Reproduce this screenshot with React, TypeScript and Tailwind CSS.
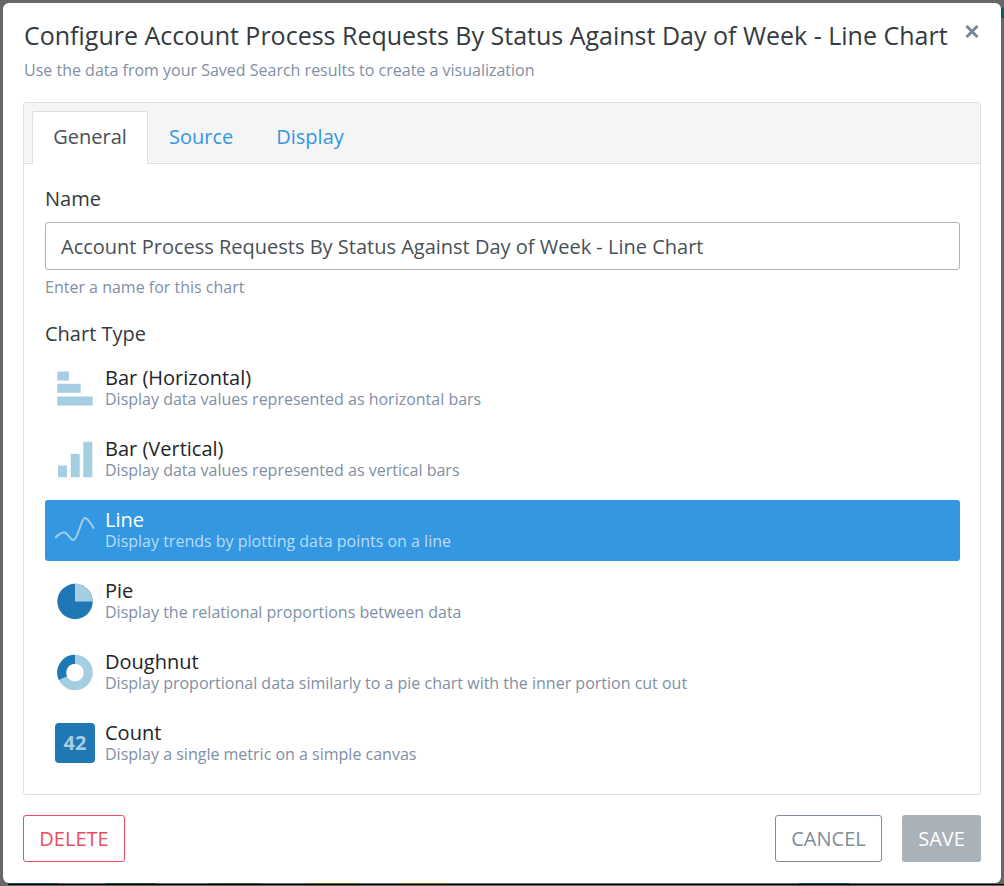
import React from "react";

const charts = [
  { name: "Bar (Horizontal)", desc: "Display data values represented as horizontal bars", icon: "hbar" },
  { name: "Bar (Vertical)", desc: "Display data values represented as vertical bars", icon: "vbar" },
  { name: "Line", desc: "Display trends by plotting data points on a line", icon: "line", active: true },
  { name: "Pie", desc: "Display the relational proportions between data", icon: "pie" },
  { name: "Doughnut", desc: "Display proportional data similarly to a pie chart with the inner portion cut out", icon: "doughnut" },
  { name: "Count", desc: "Display a single metric on a simple canvas", icon: "count" },
];

function ChartIcon({ type }: { type: string }) {
  if (type === "count") {
    return (
      <div className="w-10 h-10 mt-[-1px] rounded-[4px] bg-[#1f78b4] flex items-center justify-center text-[#a6cee3] text-[20px] font-bold">
        42
      </div>
    );
  }
  return (
    <svg width="40" height="40" viewBox="0 0 40 40">
      {type === "hbar" && (
        <g fill="#a6cee3">
          <rect x="2.3" y="2.5" width="11.7" height="9" />
          <rect x="2.3" y="14.8" width="23.4" height="9" />
          <rect x="2.3" y="27.5" width="35.4" height="9" />
        </g>
      )}
      {type === "vbar" && (
        <g fill="#a6cee3">
          <rect x="3" y="25.5" width="9" height="11.7" />
          <rect x="15.7" y="13.8" width="9" height="23.4" />
          <rect x="28.3" y="1.8" width="9" height="35.4" />
        </g>
      )}
      {type === "line" && (
        <path
          d="M0 27 C3 24 6 21.500 9 21.500 C13 21.500 15 29.500 18.500 29 C23 28.500 26 7 30 7 C33 7 36 13 39 17.500"
          fill="none"
          stroke="#a6cee3"
          strokeWidth="2"
        />
      )}
      {type === "pie" && (
        <g>
          <circle cx="20" cy="19.500" r="17.700" fill="#1f78b4" />
          <path d="M20 19.500 V1.800 A17.700 17.700 0 0 1 37.700 19.500 Z" fill="#a6cee3" />
        </g>
      )}
      {type === "doughnut" && (
        <g fill="none" strokeWidth="9">
          <circle cx="20" cy="19.500" r="13.300" stroke="#a6cee3" />
          <path d="M7.950 25.100 A13.300 13.300 0 0 1 20 6.200" stroke="#1f78b4" />
        </g>
      )}
    </svg>
  );
}

export default function App() {
  return (
    <div className="relative w-[1004px] h-[886px] bg-[#666767] pt-[3px] px-[3px] font-['Open_Sans',sans-serif] overflow-hidden">
      {/* bit of the page behind the dialog */}
      <div className="absolute right-0 top-[8px] w-[3px] h-[10px] bg-[#0f5a5e]" />

      <div className="w-[998px] h-[880px] bg-white rounded-[6px] px-5 flex flex-col">
        {/* Header */}
        <div className="flex justify-between pt-[12px] h-[99px]">
          <div>
            <h1 className="text-[25px] leading-[40px] text-[#343a40] whitespace-nowrap ml-[1px]">
              Configure Account Process Requests By Status Against Day of Week - Line Chart
            </h1>
            <p className="text-[16px] leading-[20px] mt-[5px] ml-[1px] text-[#7f8fa4] whitespace-nowrap">
              Use the data from your Saved Search results to create a visualization
            </p>
          </div>
          <svg width="16" height="15" viewBox="0 0 16 15" className="mt-[9px] mr-[1px]">
            <path d="M2.500 2 L13.500 13 M13.500 2 L2.500 13" stroke="#788594" strokeWidth="3" />
          </svg>
        </div>

        {/* Tabbed card */}
        <div className="w-[958px] h-[693px] border border-[#dfdfdf] rounded-[3px] flex flex-col">
          <div className="h-[61px] bg-[#f5f5f5] border-b border-[#dfdfdf] flex pl-2 pt-2 rounded-t-[3px]">
            <div className="h-[53px] w-[116px] pb-[2px] bg-white border border-[#dfdfdf] border-b-0 rounded-t-[3px] flex items-center justify-center text-[20px] text-[#495057]">
              General
            </div>
            <div className="h-[52px] px-[21px] flex items-center text-[20px] text-[#3397e2]">Source</div>
            <div className="h-[52px] px-[22px] flex items-center text-[20px] text-[#3397e2]">Display</div>
          </div>

          <div className="px-[21px] pt-[21px]">
            <label className="block text-[20px] leading-[28px] text-[#343a40]">Name</label>
            <div className="mt-[9px] h-[48px] w-[915px] border border-[#aab4bd] rounded-[3px] px-[15px] pt-[2px] flex items-center text-[20px] text-[#495057] whitespace-nowrap">
              Account Process Requests By Status Against Day of Week - Line Chart
            </div>
            <p className="mt-[7px] text-[16px] leading-[20px] text-[#7f8fa4]">Enter a name for this chart</p>
            <label className="block mt-[23px] text-[20px] leading-[28px] text-[#343a40]">Chart Type</label>

            <div className="mt-[10px] flex flex-col gap-[10px]">
              {charts.map((c) => (
                <div
                  key={c.name}
                  className={
                    "h-[61px] w-[915px] rounded-[3px] flex items-center pl-[10px] " +
                    (c.active ? "bg-[#3397e2]" : "")
                  }
                >
                  <div className="w-[40px] h-[40px] shrink-0">
                    <ChartIcon type={c.icon} />
                  </div>
                  <div className="ml-[10px] mt-[-1px]">
                    <div className={"text-[20px] leading-[22px] " + (c.active ? "text-white" : "text-[#212529]")}>
                      {c.name}
                    </div>
                    <div className={"text-[16px] leading-[20px] " + (c.active ? "text-[#b8dcf6]" : "text-[#7f8fa4]")}>
                      {c.desc}
                    </div>
                  </div>
                </div>
              ))}
            </div>
          </div>
        </div>

        {/* Footer */}
        <div className="flex justify-between mt-[20px]">
          <button className="w-[102px] h-[47px] border border-[#ec4c5f] rounded-[3px] text-[20px] text-[#ec4c5f]">
            DELETE
          </button>
          <div className="flex gap-[20px]">
            <button className="w-[107px] h-[47px] border border-[#7f8c99] rounded-[3px] text-[20px] text-[#7f8c99]">
              CANCEL
            </button>
            <button className="w-[79px] h-[47px] bg-[#a9b1b9] rounded-[3px] text-[20px] text-white">SAVE</button>
          </div>
        </div>
      </div>

      {/* strip of the page showing under the dialog */}
      <div className="flex h-[2px] border-b border-black ml-[5px] w-[996px]">
        <div className="w-[50px] bg-[#0f4f55]" />
        <div className="w-[48px]" />
        <div className="w-[50px] bg-[#1a5320]" />
        <div className="w-[53px]" />
        <div className="w-[50px] bg-[#3e5a1c]" />
        <div className="w-[48px]" />
        <div className="w-[50px] bg-[#6b6a16]" />
        <div className="w-[40px]" />
        <div className="w-[50px] bg-[#8a5f22]" />
        <div className="w-[352px]" />
        <div className="w-[50px] bg-[#0f4f55]" />
      </div>
    </div>
  );
}
